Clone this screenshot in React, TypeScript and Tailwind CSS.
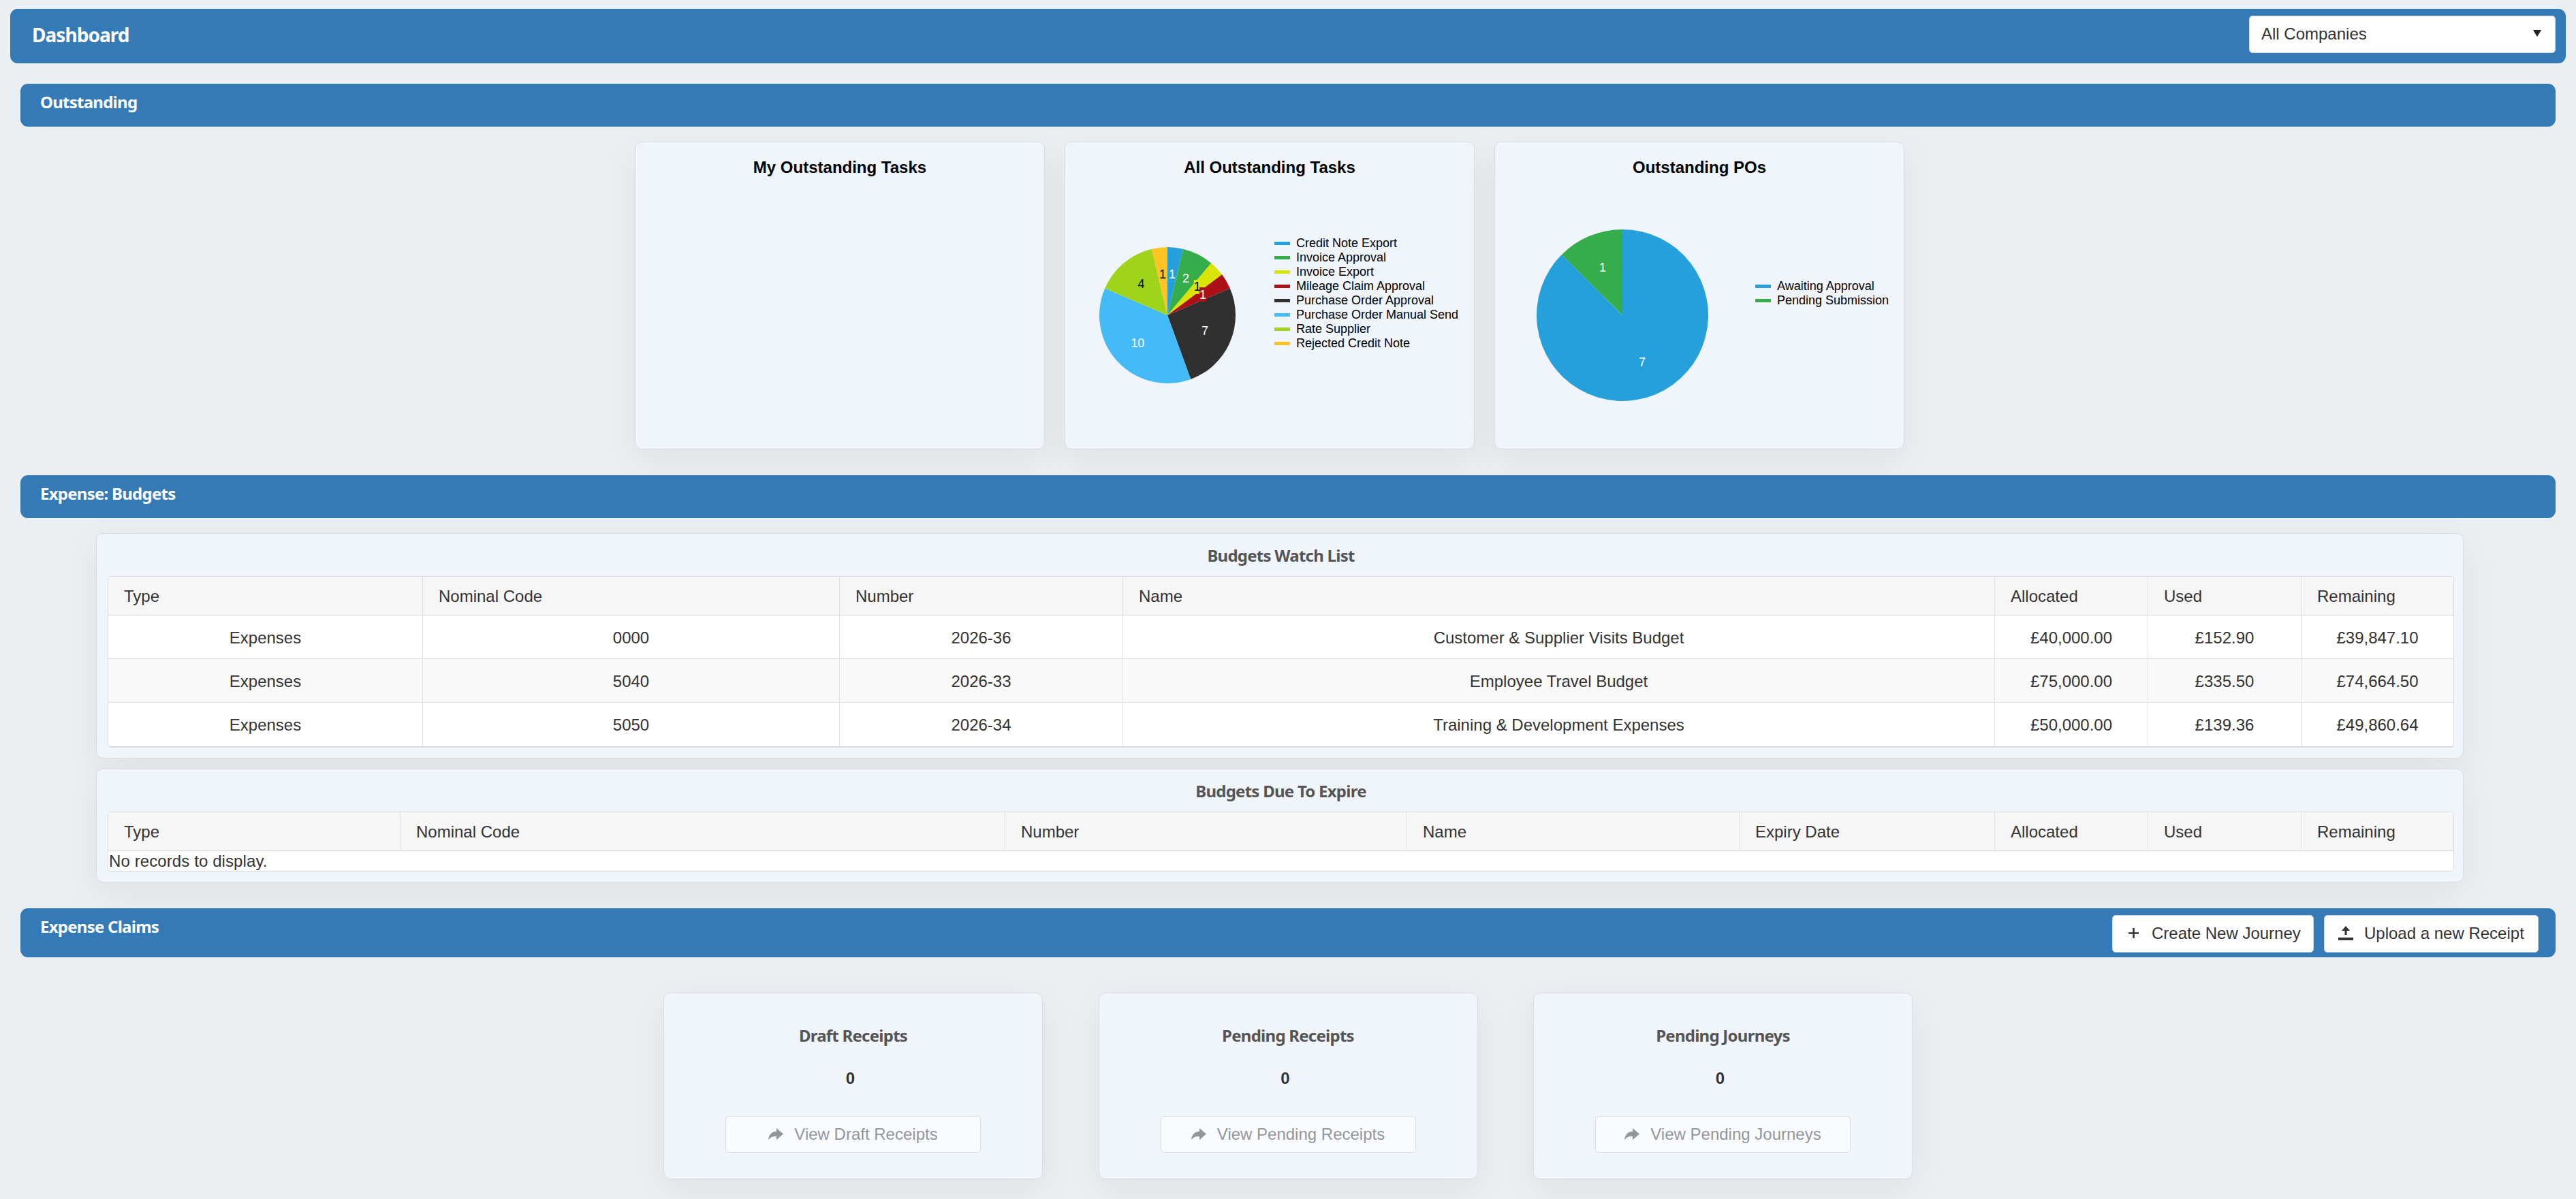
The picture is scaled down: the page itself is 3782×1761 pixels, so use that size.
import type { ReactNode } from 'react';

type Slice = { label: string; value: number; color: string; dark?: boolean; box?: boolean };

const tasks: Slice[] = [
  { label: 'Credit Note Export', value: 1, color: '#25a0da' },
  { label: 'Invoice Approval', value: 2, color: '#36ad4b' },
  { label: 'Invoice Export', value: 1, color: '#d8e404', dark: true, box: true },
  { label: 'Mileage Claim Approval', value: 1, color: '#ad1016', box: true },
  { label: 'Purchase Order Approval', value: 7, color: '#303030' },
  { label: 'Purchase Order Manual Send', value: 10, color: '#44bbf7' },
  { label: 'Rate Supplier', value: 4, color: '#a0d41a', dark: true },
  { label: 'Rejected Credit Note', value: 1, color: '#ffc424', dark: true },
];

const orders: Slice[] = [
  { label: 'Awaiting Approval', value: 7, color: '#25a0da' },
  { label: 'Pending Submission', value: 1, color: '#36ad4b' },
];

function Pie({ data, r, className }: { data: Slice[]; r: number; className: string }) {
  const total = data.reduce((s, d) => s + d.value, 0);
  const point = (value: number, radius: number) => {
    const a = (value / total) * Math.PI * 2;
    return [r + radius * Math.sin(a), r - radius * Math.cos(a)];
  };
  let sum = 0;
  const parts = data.map((d) => {
    const start = sum;
    sum += d.value;
    return { ...d, p0: point(start, r), p1: point(sum, r), mid: point(start + d.value / 2, r * 0.6) };
  });
  return (
    <svg width={r * 2} height={r * 2} className={className}>
      {parts.map((p) => (
        <path
          key={p.label}
          fill={p.color}
          d={`M${r} ${r}L${p.p0[0]} ${p.p0[1]}A${r} ${r} 0 ${p.value / total > 0.5 ? 1 : 0} 1 ${p.p1[0]} ${p.p1[1]}Z`}
        />
      ))}
      {parts.map((p) => (
        <g key={p.label}>
          {p.box && <rect x={p.mid[0] - 5} y={p.mid[1] - 11} width="10" height="21" fill={p.color} />}
          <text
            x={p.mid[0]}
            y={p.mid[1] + 5.5}
            textAnchor="middle"
            className="text-[18px]"
            fill={p.dark ? '#000' : '#fff'}
          >
            {p.value}
          </text>
        </g>
      ))}
    </svg>
  );
}

function Legend({ data, className }: { data: Slice[]; className: string }) {
  return (
    <ul className={`shrink-0 ${className}`}>
      {data.map((d) => (
        <li key={d.label} className="flex h-[21px] items-center gap-[9px] text-[18px] leading-[21px] whitespace-nowrap text-black">
          <span className="h-[5px] w-[23px]" style={{ backgroundColor: d.color }} />
          {d.label}
        </li>
      ))}
    </ul>
  );
}

const card = 'rounded-[10px] border border-[#d9dde1] bg-[#f0f4fb] shadow-[0_16px_56px_rgba(30,35,40,0.06)]';
const bar = 'relative ml-[30px] flex w-[3722px] rounded-[11px] bg-[#337ab7]';
const heading = "font-['Noto_Sans',sans-serif] font-bold text-[24px] tracking-[-0.75px]";

function ChartCard({ title, children }: { title: string; children?: ReactNode }) {
  return (
    <section className={`${card} h-[452px] w-[602px]`}>
      <h3 className="mt-[19px] mb-px text-center text-[24px] leading-[35px] font-bold text-black">{title}</h3>
      <div className="flex">{children}</div>
    </section>
  );
}

function SectionBar({ title, className, children }: { title: string; className: string; children?: ReactNode }) {
  return (
    <div className={`${bar} ${className}`}>
      <h2 className={`${heading} ml-[29px] mt-[11px] flex-1 leading-[32px] text-white`}>{title}</h2>
      {children}
    </div>
  );
}

function HeaderRow({ cols, labels }: { cols: string; labels: string[] }) {
  return (
    <div className={`grid h-[57px] border-b border-[#d8dbdd] bg-[#f6f6f6] ${cols}`}>
      {labels.map((l) => (
        <div key={l} className="h-[56px] border-r border-[#dfe1e3] pl-[23px] leading-[57px] last:border-r-0">
          {l}
        </div>
      ))}
    </div>
  );
}

const watchCols = 'grid-cols-[462px_612px_416px_1280px_225px_225px_1fr]';
const expireCols = 'grid-cols-[429px_888px_590px_488px_375px_225px_225px_1fr]';

const watchRows = [
  ['Expenses', '0000', '2026-36', 'Customer & Supplier Visits Budget', '£40,000.00', '£152.90', '£39,847.10'],
  ['Expenses', '5040', '2026-33', 'Employee Travel Budget', '£75,000.00', '£335.50', '£74,664.50'],
  ['Expenses', '5050', '2026-34', 'Training & Development Expenses', '£50,000.00', '£139.36', '£49,860.64'],
];

const claims = [
  { title: 'Draft Receipts', action: 'View Draft Receipts' },
  { title: 'Pending Receipts', action: 'View Pending Receipts' },
  { title: 'Pending Journeys', action: 'View Pending Journeys' },
];

export default function App() {
  return (
    <div className="flex h-[1761px] w-[3782px] flex-col overflow-hidden bg-[#ebeff2] font-['Liberation_Sans',Arial,sans-serif] text-[24px] text-[#333]">
      <header className="mt-[13px] ml-[15px] flex h-[80px] w-[3752px] shrink-0 justify-between rounded-[11px] bg-[#337ab7]">
        <h1 className="mt-[19px] ml-[32px] font-['Noto_Sans',sans-serif] text-[28px] leading-[38px] font-bold tracking-[-0.95px] text-white">
          Dashboard
        </h1>
        <div className="mt-[10px] mr-[15px] flex h-[55px] w-[450px] items-center justify-between rounded-[5px] border border-[#ccd6df] bg-white pr-[20px] pb-px pl-[17px]">
          <span>All Companies</span>
          <svg width="12" height="10" viewBox="0 0 12 10" className="mb-[3px]">
            <path d="M0 0H12L6 10Z" fill="#222" />
          </svg>
        </div>
      </header>

      <SectionBar title="Outstanding" className="mt-[30px] h-[63px]" />

      <div className="mt-[22px] ml-[932px] flex gap-[29px]">
        <ChartCard title="My Outstanding Tasks" />
        <ChartCard title="All Outstanding Tasks">
          <Pie data={tasks} r={100} className="mt-[99px] ml-[50px] shrink-0" />
          <Legend data={tasks} className="mt-[83px] ml-[57px]" />
        </ChartCard>
        <ChartCard title="Outstanding POs">
          <Pie data={orders} r={126} className="mt-[73px] ml-[61px] shrink-0" />
          <Legend data={orders} className="mt-[146px] ml-[69px]" />
        </ChartCard>
      </div>

      <SectionBar title="Expense: Budgets" className="mt-[38px] h-[63px]" />

      <section className={`${card} mt-[22px] ml-[141px] h-[331px] w-[3476px] shrink-0 pr-[13px] pl-[16px]`}>
        <h3 className={`${heading} mt-[16px] h-[46px] text-center leading-[32px] text-[#555]`}>Budgets Watch List</h3>
        <div className="h-[252px] overflow-hidden rounded-[5px] border border-b-2 border-[#d8dbdd] bg-white">
          <HeaderRow cols={watchCols} labels={['Type', 'Nominal Code', 'Number', 'Name', 'Allocated', 'Used', 'Remaining']} />
          {watchRows.map((row) => (
            <div
              key={row[1]}
              className={`grid h-[64px] border-b border-[#d8dbdd] text-center last:border-b-0 odd:bg-[#f9f9f9] even:bg-white ${watchCols}`}
            >
              {row.map((c, i) => (
                <div key={i} className="h-full border-r border-[#dfe1e3] leading-[66px] last:border-r-0">
                  {c}
                </div>
              ))}
            </div>
          ))}
        </div>
      </section>

      <section className={`${card} mt-[15px] ml-[141px] h-[167px] w-[3476px] shrink-0 pr-[13px] pl-[16px]`}>
        <h3 className={`${heading} mt-[16px] h-[46px] text-center leading-[32px] text-[#555]`}>Budgets Due To Expire</h3>
        <div className="h-[88px] overflow-hidden rounded-[5px] border border-[#d8dbdd] bg-white">
          <HeaderRow
            cols={expireCols}
            labels={['Type', 'Nominal Code', 'Number', 'Name', 'Expiry Date', 'Allocated', 'Used', 'Remaining']}
          />
          <div className="pl-px leading-[30px] tracking-[0.1px]">No records to display.</div>
        </div>
      </section>

      <SectionBar title="Expense Claims" className="mt-[38px] h-[72px]">
        <div className="mt-[10px] mr-[25px] flex gap-[15px]">
          <button className="flex h-[55px] w-[296px] items-center rounded-[5px] border border-[#ccd6df] bg-white pb-[2px] pl-[23px]">
            <svg width="15" height="15" viewBox="0 0 15 15" className="mr-[19px]">
              <path d="M7.5 0V15M0 7.5H15" stroke="#333" strokeWidth="2.6" />
            </svg>
            Create New Journey
          </button>
          <button className="flex h-[55px] w-[315px] items-center rounded-[5px] border border-[#ccd6df] bg-white pb-[2px] pl-[20px]">
            <svg width="22" height="21" viewBox="0 0 22 21" className="mr-[16px]">
              <path d="M11 0L17 7H12.5V13H9.5V7H5ZM0 17H22V21H0Z" fill="#333" />
            </svg>
            Upload a new Receipt
          </button>
        </div>
      </SectionBar>

      <div className="mt-[52px] ml-[974px] flex gap-[81.5px]">
        {claims.map((c) => (
          <section key={c.title} className={`${card} flex h-[274px] w-[557px] flex-col items-center`}>
            <h3 className={`${heading} mt-[46px] leading-[32px] text-[#555]`}>{c.title}</h3>
            <div className="mt-[31px] mr-[8px] text-[24px] leading-[32px] font-bold">0</div>
            <button className="mt-[39px] flex h-[54px] w-[375px] items-center justify-center rounded-[5px] border border-[#d9dde2] bg-[#f9fbff] text-[#939699]">
              <svg width="22" height="18" viewBox="0 0 22 18" className="mr-[16px]">
                <path d="M12 0L22 8.5L12 17V12.2C7 11.5 3 13.5 0 17C0.8 9.5 5 5.3 12 4.8Z" fill="#939699" />
              </svg>
              {c.action}
            </button>
          </section>
        ))}
      </div>
    </div>
  );
}
